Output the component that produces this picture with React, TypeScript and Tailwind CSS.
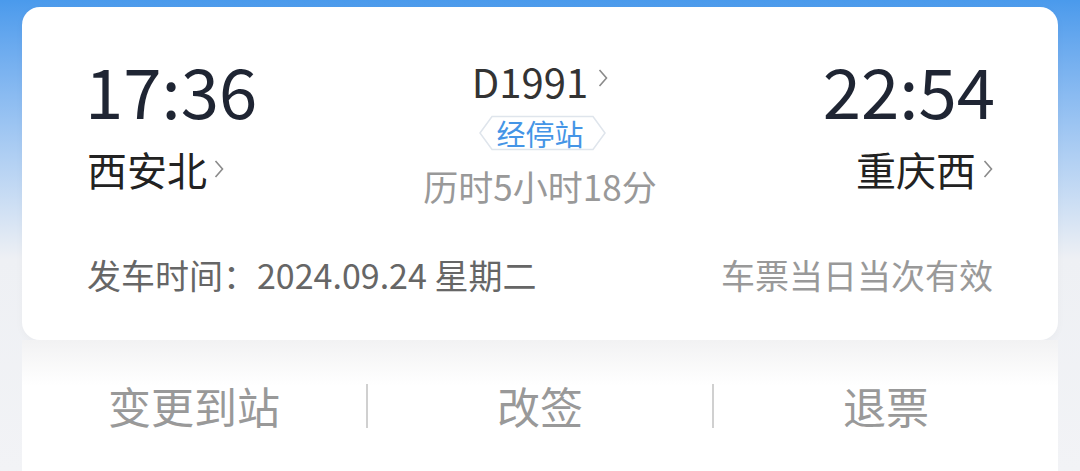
import React from 'react';

const font = { fontFamily: '"Noto Sans CJK SC", "Noto Sans", sans-serif' };

const Chevron: React.FC<{ className?: string }> = ({ className }) => (
  <svg width="10" height="20" viewBox="0 0 10 20" className={className}>
    <polyline points="1.5,2 8.5,10 1.5,18" fill="none" stroke="#8a8a8a" strokeWidth="1.6" />
  </svg>
);

const StopsBadge: React.FC = () => (
  <div className="relative flex h-[36px] w-[170px] items-center justify-center">
    <svg width="170" height="36" viewBox="0 0 170 36" className="absolute inset-0">
      <defs>
        <linearGradient id="l" x1="0" x2="1">
          <stop offset="0" stopColor="#e3e8ee" stopOpacity="0" />
          <stop offset="1" stopColor="#e3e8ee" />
        </linearGradient>
        <linearGradient id="r" x1="0" x2="1">
          <stop offset="0" stopColor="#e3e8ee" />
          <stop offset="1" stopColor="#e3e8ee" stopOpacity="0" />
        </linearGradient>
      </defs>
      <line x1="0" y1="18" x2="25" y2="18" stroke="url(#l)" strokeWidth="1.5" />
      <line x1="150" y1="18" x2="170" y2="18" stroke="url(#r)" strokeWidth="1.5" />
      <polygon points="25,18 37,1.5 138,1.5 150,18 138,34.5 37,34.5" fill="#ffffff" stroke="#dfe5ec" strokeWidth="1.5" />
    </svg>
    <span className="relative text-[29px] leading-none text-[#4595e6]">经停站</span>
  </div>
);

const App: React.FC = () => {
  return (
    <div
      className="h-[471px] w-[1080px] overflow-hidden bg-linear-to-b from-[#4a9aec] via-[#eef0f4] via-55% to-[#f2f3f6]"
      style={font}
    >
      <div className="mx-[22px] pt-[7px]">
        <div className="h-[333px] rounded-[18px] bg-white px-[65px] pt-[48px] shadow-[0_2px_8px_rgba(0,0,0,0.03)]">
          <div className="flex items-start justify-between">
            <div className="flex flex-col">
              <span className="-ml-[2px] text-[69px] leading-[69px] text-[#1f2533]">17:36</span>
              <div className="mt-[25px] flex items-center gap-[7px]">
                <span className="text-[40px] leading-none text-[#222]">西安北</span>
                <Chevron />
              </div>
            </div>

            <div className="flex flex-col items-center pt-[6px]">
              <div className="flex items-center gap-[10px]">
                <span className="text-[40px] leading-none text-[#333]">D1991</span>
                <Chevron className="-mt-[6px]" />
              </div>
              <div className="mt-[14px]">
                <StopsBadge />
              </div>
              <span className="mt-[17px] text-[35px] leading-none text-[#999]">历时5小时18分</span>
            </div>

            <div className="flex flex-col items-end">
              <span className="-mr-[2px] text-[69px] leading-[69px] text-[#1f2533]">22:54</span>
              <div className="mt-[25px] flex items-center gap-[7px]">
                <span className="text-[40px] leading-none text-[#222]">重庆西</span>
                <Chevron />
              </div>
            </div>
          </div>

          <div className="mt-[55px] flex items-center justify-between">
            <span className="text-[34px] leading-none text-[#666]">发车时间：2024.09.24 星期二</span>
            <span className="text-[34px] leading-none text-[#999]">车票当日当次有效</span>
          </div>
        </div>

        <div className="flex h-[131px] items-center bg-linear-to-b from-[#f2f2f3] via-white via-35% to-white">
          <button className="flex-1 text-[43px] leading-none text-[#999]">变更到站</button>
          <div className="h-[44px] w-[2px] bg-[#d0d0d0]" />
          <button className="flex-1 text-[43px] leading-none text-[#999]">改签</button>
          <div className="h-[44px] w-[2px] bg-[#d0d0d0]" />
          <button className="flex-1 text-[43px] leading-none text-[#999]">退票</button>
        </div>
      </div>
    </div>
  );
};

export default App;
